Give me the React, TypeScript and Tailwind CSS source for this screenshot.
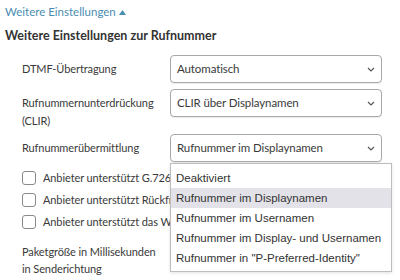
import React from 'react';

const Chevron = () => (
  <svg width="8" height="5" viewBox="0 0 8 5" className="shrink-0">
    <path d="M1 1l3 3 3-3" fill="none" stroke="#555" strokeWidth="1.2" />
  </svg>
);

const Select = ({ value }: { value: string }) => (
  <div className="flex h-[28px] w-[212px] items-center justify-between rounded-[4px] border border-[#a9a9a9] bg-white pl-[6px] pr-[6px] text-[11.5px] tracking-[-0.1px] text-[#3a3a3a] shadow-[0_1px_1px_rgba(0,0,0,0.08)]">
    <span>{value}</span>
    <Chevron />
  </div>
);

const options = [
  'Deaktiviert',
  'Rufnummer im Displaynamen',
  'Rufnummer im Usernamen',
  'Rufnummer im Display- und Usernamen',
  'Rufnummer in "P-Preferred-Identity"',
];

const checks = [
  'Anbieter unterstützt G.726 nach RFC 3551',
  'Anbieter unterstützt Rückfragen',
  'Anbieter unterstützt das WAV-Format',
];

export default function App() {
  return (
    <div className="relative h-[280px] w-[400px] overflow-hidden bg-white pl-[5px] font-['Lato',sans-serif] text-[#3a3a3a]">
      <div className="flex h-[24px] items-center gap-[3px] text-[11.5px] text-[#4a8db0]">
        <span>Weitere Einstellungen</span>
        <svg width="7" height="5" viewBox="0 0 7 5">
          <path d="M0 5L3.5 0 7 5z" fill="#4a8db0" />
        </svg>
      </div>
      <h3 className="mt-[3px] text-[12.5px] font-bold leading-[18px] text-[#333]">
        Weitere Einstellungen zur Rufnummer
      </h3>

      <div className="mt-[10px] flex items-center text-[11px] tracking-[-0.1px]">
        <div className="w-[165px] pl-[17px]">DTMF-Übertragung</div>
        <Select value="Automatisch" />
      </div>

      <div className="mt-[6px] flex items-start text-[11px] tracking-[-0.1px]">
        <div className="w-[165px] pl-[17px] pt-[5px] leading-[18px]">
          Rufnummernunterdrückung
          <br />
          (CLIR)
        </div>
        <Select value="CLIR über Displaynamen" />
      </div>

      <div className="mt-[4px] flex items-center text-[11px] tracking-[-0.1px]">
        <div className="w-[165px] pl-[17px]">Rufnummerübermittlung</div>
        <div className="relative">
          <Select value="Rufnummer im Displaynamen" />
          <div className="absolute left-0 top-[29px] z-10 w-[222px] border border-[#bdbdbd] bg-white pb-[3px] pt-[4px] font-['Liberation_Sans',sans-serif] text-[11.5px] tracking-normal text-[#333] shadow-[0_1px_3px_rgba(0,0,0,0.12)]">
            {options.map((o, i) => (
              <div
                key={o}
                className={`h-[20px] whitespace-nowrap px-[5px] leading-[20px] ${i === 1 ? 'bg-[#e2e2e8]' : ''}`}
              >
                {o}
              </div>
            ))}
          </div>
        </div>
      </div>

      <div className="mt-[5px] pl-[17px]">
        {checks.map((c) => (
          <div key={c} className="flex h-[22px] items-center gap-[7px] whitespace-nowrap text-[11px] tracking-[-0.1px]">
            <span className="h-[14px] w-[14px] shrink-0 rounded-[3px] border border-[#8a8a8a] bg-white" />
            <span>{c}</span>
          </div>
        ))}
      </div>

      <div className="mt-[10px] pl-[17px] text-[11px] leading-[17px] tracking-[-0.1px]">
        Paketgröße in Millisekunden
        <br />
        in Senderichtung
      </div>
    </div>
  );
}
